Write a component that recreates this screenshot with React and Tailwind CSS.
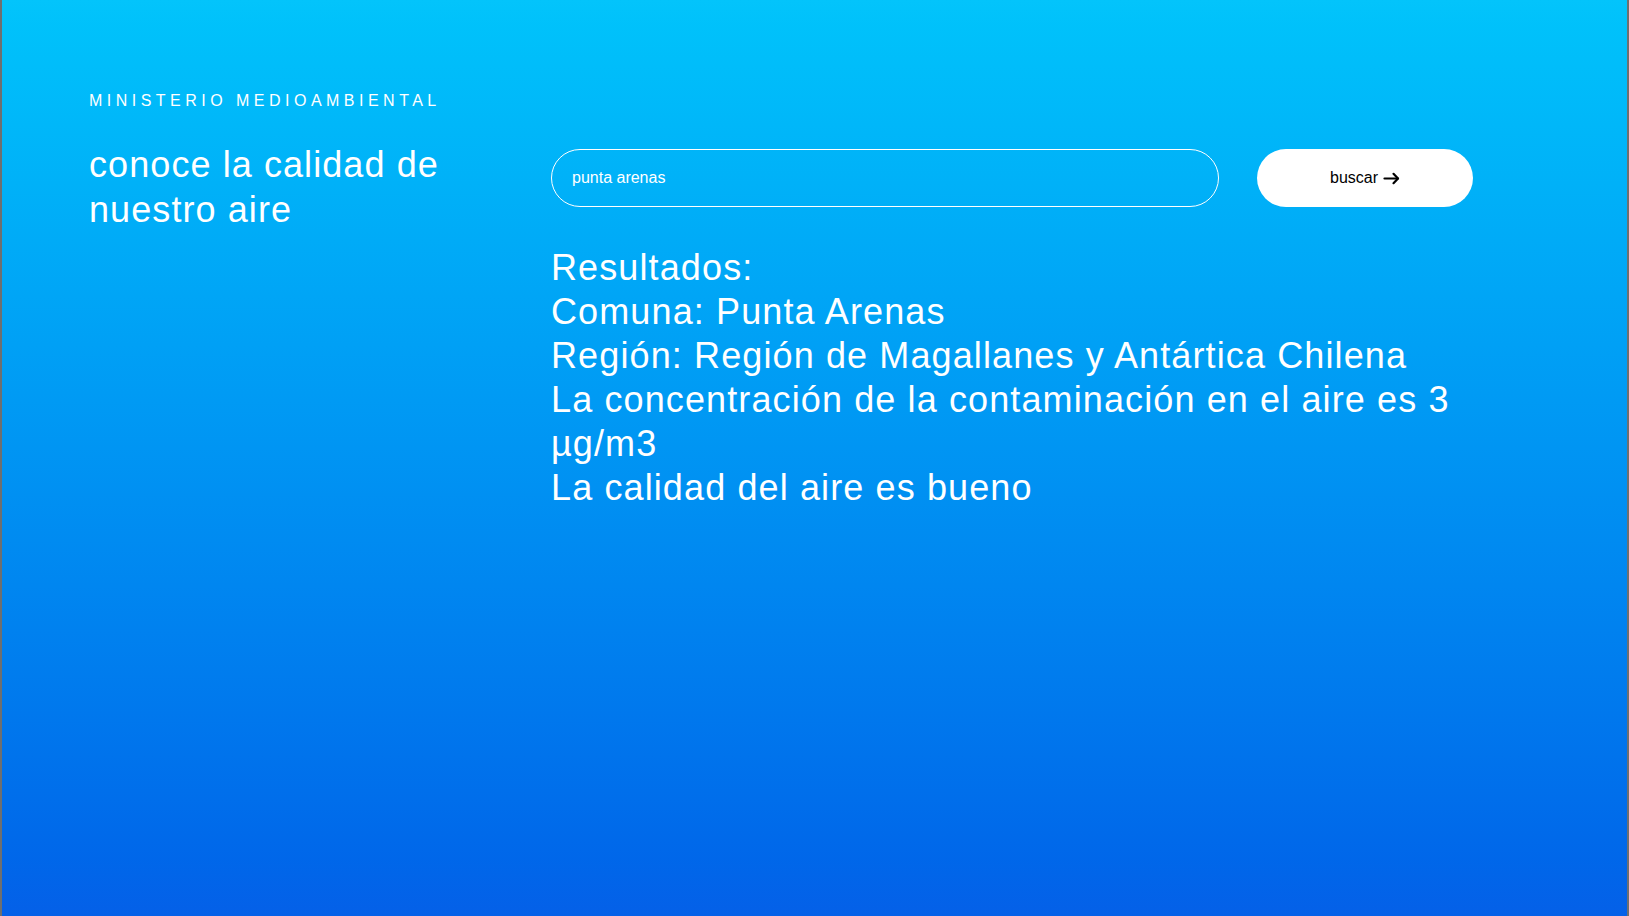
import { useState } from 'react'

const RESULT = {
  comuna: 'Punta Arenas',
  region: 'Región de Magallanes y Antártica Chilena',
  valor: 3,
  calidad: 'bueno',
}

function Arrow() {
  return (
    <svg width="17" height="13" viewBox="0 0 17 13" fill="none" stroke="currentColor" strokeWidth="2.2" strokeLinecap="round" strokeLinejoin="round">
      <path d="M1.5 6.5h13.5" />
      <path d="M10.5 1.8 15 6.5l-4.5 4.7" />
    </svg>
  )
}

export default function App() {
  const [query, setQuery] = useState('punta arenas')

  return (
    <div className="min-h-[916px] w-full border-x-2 border-[#6f6f6f] bg-gradient-to-b from-[#03c4fb] to-[#0560e8] font-['Liberation_Sans',Arial,sans-serif] text-white">
      <div className="pl-[87px] pt-[91px]">
        <p className="text-base leading-[20px] tracking-[0.28em]">MINISTERIO MEDIOAMBIENTAL</p>

        <div className="mt-[31px] flex">
          <h1 className="w-[462px] shrink-0 text-[36px] leading-[45px] tracking-[0.03em]">
            conoce la calidad de<br />nuestro aire
          </h1>

          <div className="w-[922px] pt-[7px]">
            {/* Search */}
            <div className="flex items-center gap-[38px]">
              <input
                value={query}
                onChange={e => setQuery(e.target.value)}
                className="h-[58px] w-[668px] rounded-full border border-white bg-transparent px-5 text-base text-white outline-none"
              />
              <button className="flex h-[58px] w-[216px] items-center justify-center gap-[5px] rounded-full bg-white text-base text-black">
                buscar <Arrow />
              </button>
            </div>

            {/* Results */}
            <div className="mt-[39px] text-[36px] leading-[44px] tracking-[0.031em]">
              <p>Resultados:</p>
              <p>Comuna: {RESULT.comuna}</p>
              <p>Región: {RESULT.region}</p>
              <p>La concentración de la contaminación en el aire es {RESULT.valor} µg/m3</p>
              <p>La calidad del aire es {RESULT.calidad}</p>
            </div>
          </div>
        </div>
      </div>
    </div>
  )
}
